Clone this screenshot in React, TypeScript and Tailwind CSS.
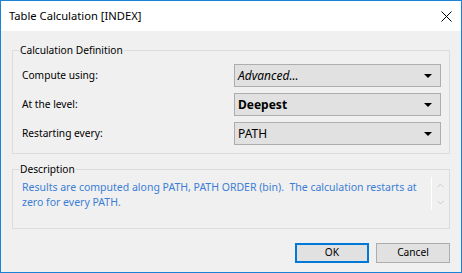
import { ChevronUp, ChevronDown } from "lucide-react";

function Dropdown({ value, className = "" }: { value: string; className?: string }) {
  return (
    <div className="w-[207px] h-[23px] bg-[#e1e1e1] border border-[#adadad] flex items-center pl-[3px] pr-[8px]">
      <span className={`flex-1 text-[12px] ${className}`}>{value}</span>
      <svg width="8" height="4" viewBox="0 0 8 4">
        <path d="M0 0 H8 L4 4 Z" fill="#000" />
      </svg>
    </div>
  );
}

const rows = [
  { label: "Compute using:", value: "Advanced...", cls: "italic" },
  { label: "At the level:", value: "Deepest", cls: "font-bold text-[11.5px]" },
  { label: "Restarting every:", value: "PATH", cls: "" },
];

export default function App() {
  return (
    <div className="w-[462px] h-[273px] border border-[#1883d7] flex flex-col text-[10.2px] text-black overflow-hidden font-['Noto_Sans',sans-serif]">
      {/* Title bar */}
      <div className="h-[30px] bg-white flex items-center pl-[8px] pr-[9px] shrink-0">
        <span className="flex-1 text-[11.2px]">Table Calculation [INDEX]</span>
        <svg width="11" height="11" viewBox="0 0 11 11">
          <path d="M0.5 0.5 L10.5 10.5 M10.5 0.5 L0.5 10.5" stroke="#000" strokeWidth="1" />
        </svg>
      </div>

      {/* Body */}
      <div className="flex-1 bg-[#f0f0f0] px-[11px] pt-[11px] flex flex-col">
        <fieldset className="border border-[#dcdcdc] pl-[9px] pr-[8px] pt-[6px] pb-[8px] flex flex-col gap-[6px]">
          <legend className="px-[1px] ml-[-3px] leading-[16px]">Calculation Definition</legend>
          {rows.map((r) => (
            <div key={r.label} className="flex items-center justify-between">
              <span>{r.label}</span>
              <Dropdown value={r.value} className={r.cls} />
            </div>
          ))}
        </fieldset>

        <fieldset className="mt-[7px] border border-[#dcdcdc] h-[68px] flex">
          <legend className="px-[1px] ml-[6px] leading-[16px]">Description</legend>
          <div className="flex-1 pl-[9px] pt-[3px] pr-[6px] text-[10.5px] leading-[15px] text-[#3b7ed6]">
            Results are computed along PATH, PATH ORDER (bin).&nbsp; The calculation restarts at zero for every PATH.
          </div>
          <div className="w-[18px] border-l border-white flex flex-col items-center justify-between pt-[3px] pb-[2px] text-[#c8c8c8]">
            <ChevronUp size={11} strokeWidth={2} />
            <ChevronDown size={11} strokeWidth={2} />
          </div>
        </fieldset>

        <div className="flex justify-end gap-[7px] mt-[14px]">
          <button className="w-[74px] h-[20px] bg-[#e1e1e1] border-2 border-[#0078d7] flex items-center justify-center">
            OK
          </button>
          <button className="w-[74px] h-[20px] bg-[#e1e1e1] border border-[#adadad] flex items-center justify-center">
            Cancel
          </button>
        </div>
      </div>
    </div>
  );
}
